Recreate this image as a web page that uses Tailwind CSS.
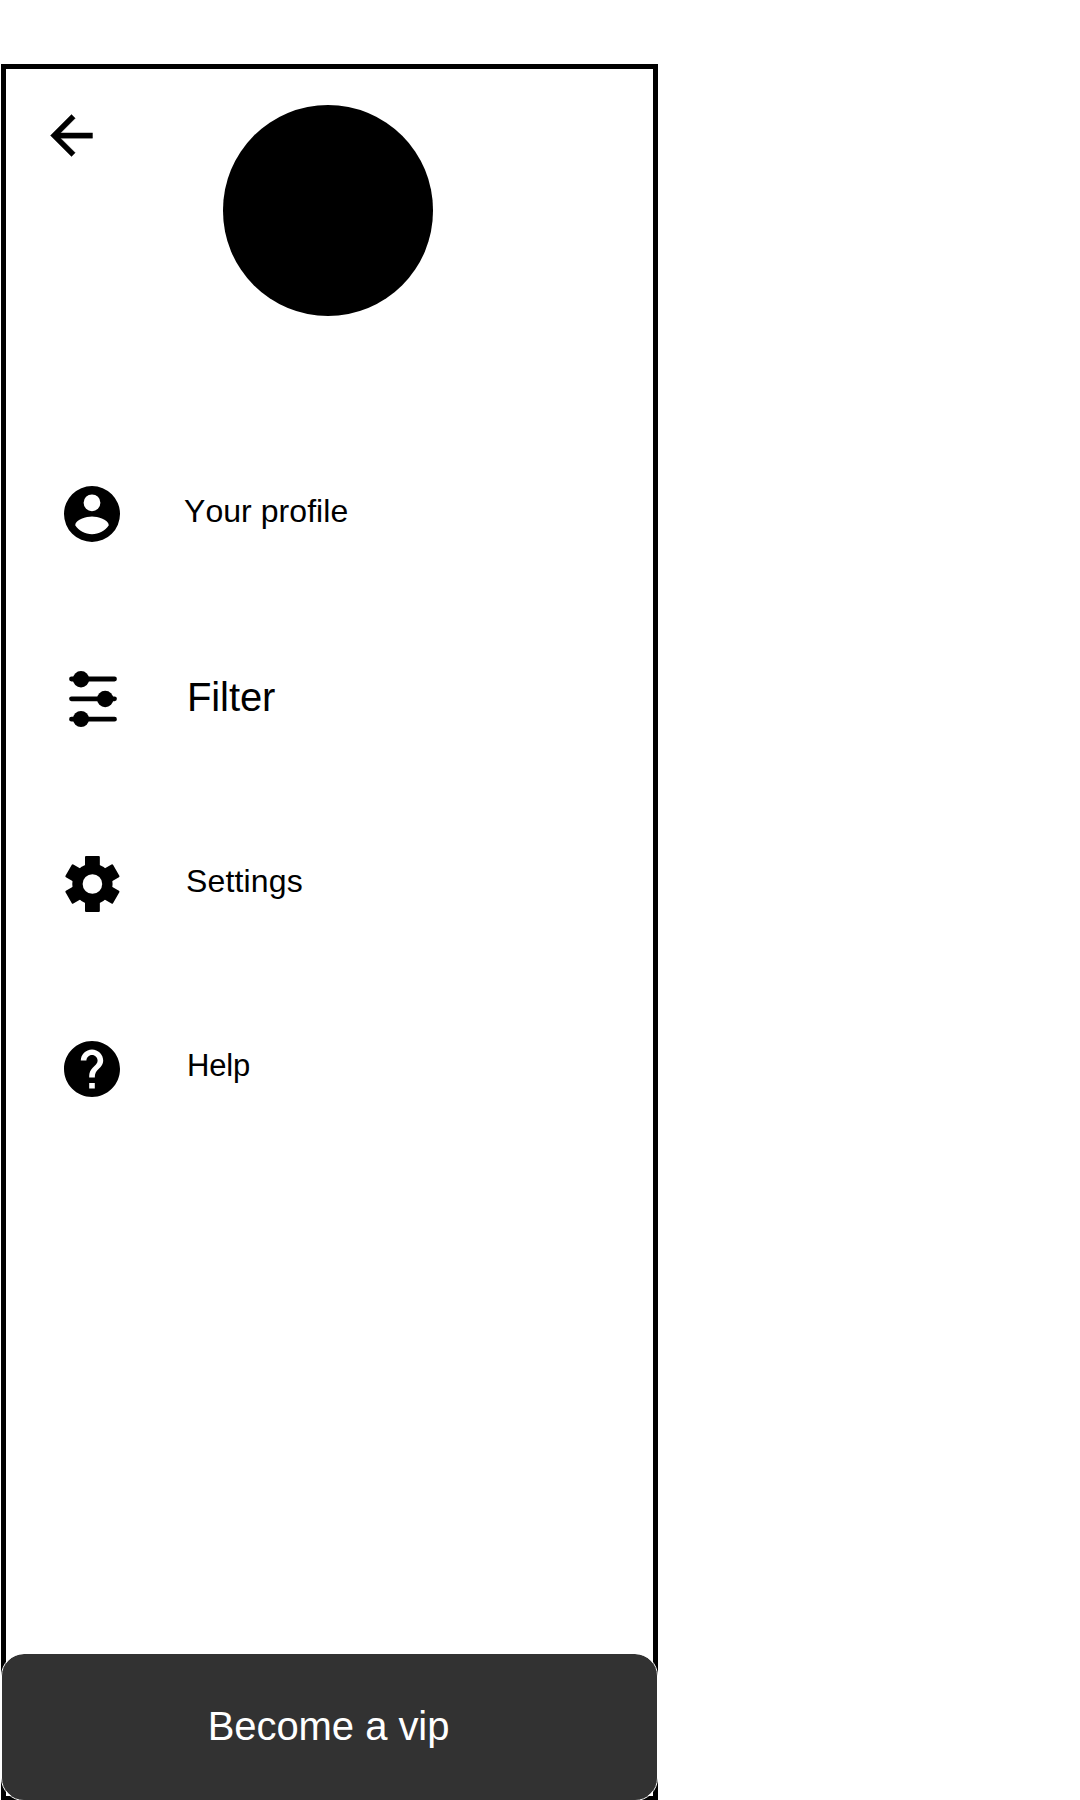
<!DOCTYPE html>
<html lang="en">
<head>
<meta charset="utf-8">
<title>Menu</title>
<script src="https://cdn.jsdelivr.net/npm/@tailwindcss/browser@4"></script>
</head>
<body class="h-[1800px] overflow-hidden bg-white pt-[58px] font-['Liberation_Sans',Arial,sans-serif] text-black">
<div class="pt-1.5 pl-px">
<main class="relative flex h-[1737px] w-[657px] flex-col border-5 border-black bg-white">
  <header class="flex h-[352.5px] pt-9 pl-[34px]">
    <button aria-label="Back" class="-mt-px h-[63px] w-[63px] shrink-0">
      <svg viewBox="0 0 24 24" class="size-[63px]"><path stroke="#000" stroke-width=".15" d="M20 11H7.830l5.590-5.590L12 4l-8 8 8 8 1.410-1.410L7.830 13H20v-2z"/></svg>
    </button>
    <div class="ml-[120px] h-[211px] w-[210px] rounded-full bg-black"></div>
  </header>
  <nav class="flex flex-col pl-[58px]">
    <a class="flex h-[185px] items-center">
      <svg viewBox="2 2 20 20" class="size-14 shrink-0"><path fill-rule="evenodd" d="M12 2a10 10 0 1 0 0 20 10 10 0 0 0 0-20zm0 3a3 3 0 1 1 0 6 3 3 0 0 1 0-6zm0 14.200c-2.500 0-4.710-1.280-6-3.220.030-1.990 4-3.080 6-3.080 1.990 0 5.970 1.090 6 3.080-1.290 1.940-3.500 3.220-6 3.220z"/></svg>
      <span class="ml-16 pb-1.5 text-[32px] leading-10 tracking-[0.05px] [font-kerning:none]">Your profile</span>
    </a>
    <a class="flex h-[185px] items-center">
      <svg viewBox="0 0 56 56" class="size-14 shrink-0"><path d="M7.500 8h43M7.500 27.800h43M7.500 48.200h43" fill="none" stroke="#000" stroke-width="4.800" stroke-linecap="round"/><circle cx="17" cy="8.200" r="8.200"/><circle cx="41.200" cy="28" r="8.200"/><circle cx="17" cy="48" r="8"/></svg>
      <span class="ml-[67px] pb-1 text-[40px] leading-12 tracking-[-0.1px]">Filter</span>
    </a>
    <a class="flex h-[185px] items-center">
      <svg viewBox="2 2 20 20" class="size-14 shrink-0"><g transform="translate(12.15 12)"><circle r="7.200"/><rect x="-2.650" y="-10" width="5.300" height="20" rx=".4"/><rect x="-2.650" y="-9.800" width="5.300" height="19.600" rx=".4" transform="rotate(60)"/><rect x="-2.650" y="-9.800" width="5.300" height="19.600" rx=".4" transform="rotate(120)"/><circle r="3.500" fill="#fff"/></g></svg>
      <span class="ml-[66px] pb-1.5 text-[32px] leading-10 tracking-[0.15px]">Settings</span>
    </a>
    <a class="flex h-[185px] items-center">
      <svg viewBox="2 2 20 20" class="size-14 shrink-0"><path d="M12 2C6.480 2 2 6.480 2 12s4.480 10 10 10 10-4.480 10-10S17.520 2 12 2zm1 17h-2v-2h2v2zm2.070-7.750l-.9.920C13.450 12.900 13 13.500 13 15h-2v-.5c0-1.100.45-2.100 1.170-2.830l1.240-1.260c.37-.36.590-.86.590-1.410 0-1.100-.9-2-2-2s-2 .9-2 2H8c0-2.210 1.790-4 4-4s4 1.790 4 4c0 .88-.36 1.680-.93 2.250z"/></svg>
      <span class="ml-[67px] pb-1.5 text-[31px] leading-10 tracking-[-0.15px]">Help</span>
    </a>
  </nav>
  <button class="absolute -bottom-1 -left-[4px] h-[146px] w-[655px] rounded-[22px] bg-[#323232] pr-0.5 pb-0.5 text-[40px] tracking-[-0.05px] text-white outline outline-white">Become a vip</button>
</main>
</div>
</body>
</html>
